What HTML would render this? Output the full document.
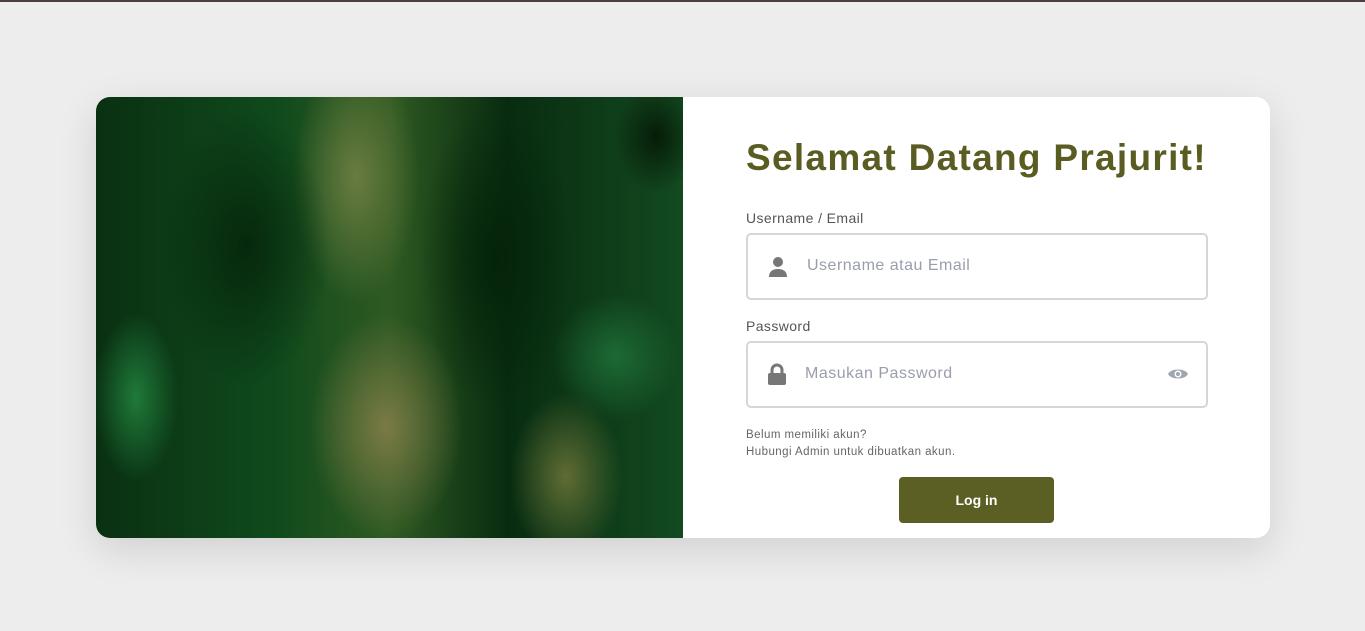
<!DOCTYPE html>
<html><head><meta charset="utf-8"><style>
*{box-sizing:border-box;margin:0;padding:0}
body{width:1365px;height:631px;background:#ededed;font-family:"Liberation Sans",sans-serif;position:relative;overflow:hidden}
.top{position:absolute;left:0;top:0;width:1365px;height:2px;background:#4a3f42}
.card{position:absolute;left:96px;top:97px;width:1174px;height:441px;background:#fff;border-radius:14px;box-shadow:0 12px 40px rgba(0,0,0,.12);overflow:hidden}
.img{position:absolute;left:0;top:0;width:587px;height:441px;
background:
radial-gradient(ellipse 60px 120px at 40px 300px,#1f7a3a 0,transparent 70%),
radial-gradient(ellipse 120px 200px at 150px 150px,#06280c 0,transparent 70%),
radial-gradient(ellipse 90px 180px at 260px 80px,#6a7c40 0,transparent 70%),
radial-gradient(ellipse 110px 160px at 290px 330px,#7a7a45 0,transparent 70%),
radial-gradient(ellipse 80px 120px at 470px 380px,#5f6c34 0,transparent 70%),
radial-gradient(ellipse 110px 220px at 400px 160px,#042409 0,transparent 70%),
radial-gradient(ellipse 90px 90px at 520px 260px,#1d6a34 0,transparent 70%),
radial-gradient(ellipse 60px 80px at 560px 40px,#061c08 0,transparent 70%),
linear-gradient(90deg,#0a3012 0,#0f4a1c 30%,#2f5a22 50%,#082c10 70%,#134a20 100%)}
h1{position:absolute;left:650px;top:40px;font-size:37px;font-weight:bold;color:#5a5c22;letter-spacing:1.3px;white-space:nowrap}
.lbl{position:absolute;left:650px;font-size:14px;color:#555;letter-spacing:.4px}
.inp{position:absolute;left:650px;width:462px;height:67px;border:2px solid #d6d6d6;border-radius:5px}
.ph{position:absolute;left:59px;top:22px;font-size:16px;color:#9a9eac;letter-spacing:.5px}
.note{position:absolute;left:650px;top:330px;font-size:11.5px;color:#666;line-height:17px;letter-spacing:.45px}
.btn{position:absolute;left:803px;top:380px;width:155px;height:46px;background:#5c5f24;border-radius:4px;color:#fff;font-weight:bold;font-size:14px;text-align:center;line-height:46px}
</style></head><body>
<div class="top"></div>
<div class="card">
<div class="img"></div>
<h1>Selamat Datang Prajurit!</h1>
<div class="lbl" style="top:113px">Username / Email</div>
<div class="inp" style="top:136px">
<svg style="position:absolute;left:20px;top:21px" width="20" height="22" viewBox="0 0 20 22"><circle cx="10" cy="6" r="5" fill="#777"/><path d="M1 21c0-6 4-8 9-8s9 2 9 8z" fill="#777"/></svg>
<div class="ph">Username atau Email</div></div>
<div class="lbl" style="top:221px">Password</div>
<div class="inp" style="top:244px">
<svg style="position:absolute;left:20px;top:20px" width="18" height="22" viewBox="0 0 18 22"><path d="M4 10V7a5 5 0 0110 0v3" stroke="#777" stroke-width="3" fill="none"/><rect x="0" y="10" width="18" height="12" rx="2" fill="#777"/></svg>
<div class="ph" style="left:57px">Masukan Password</div>
<svg style="position:absolute;left:420px;top:24px" width="20" height="14" viewBox="0 0 20 14"><path d="M0 7C3 1 17 1 20 7 17 13 3 13 0 7z" fill="#a0a6b0"/><circle cx="10" cy="7" r="3.5" fill="#fff"/><circle cx="10" cy="7" r="2" fill="#a0a6b0"/></svg>
</div>
<div class="note">Belum memiliki akun?<br>Hubungi Admin untuk dibuatkan akun.</div>
<div class="btn">Log in</div>
</div>
</body></html>
